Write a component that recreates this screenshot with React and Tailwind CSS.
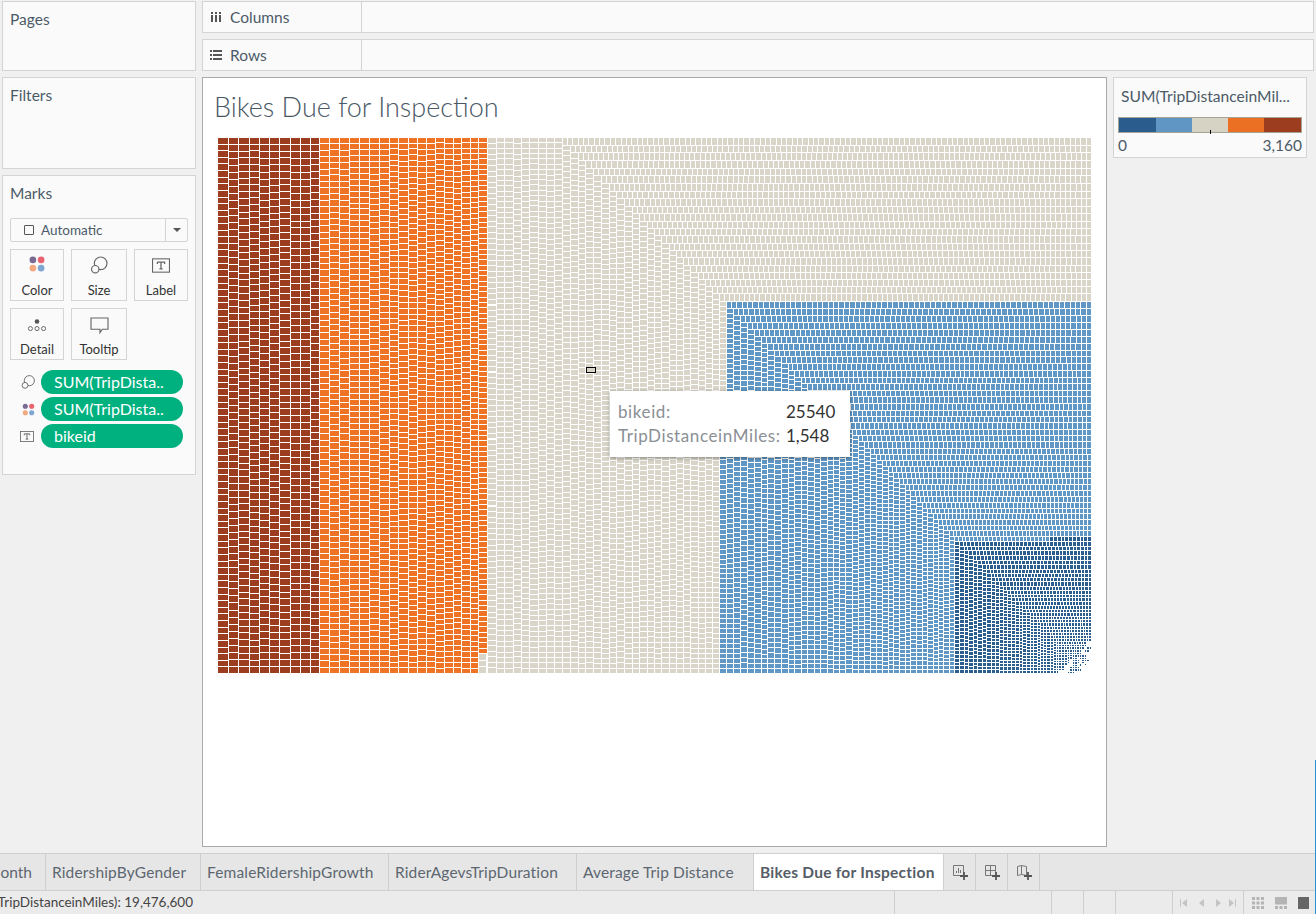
import React from "react";

// treemap data is generated: a big ordered set of small cells laid out in staircases
const COLORS = { brown: "#9c3d20", orange: "#ee7324", beige: "#d9d5c8", light: "#6197c4", dark: "#2b5e8e" };
const OFF_X = 218;
const OFF_Y = 138;
const BOTTOM = 674;
const RIGHT = 1092;

let seed = 7;
const rand = () => {
  seed = (seed * 16807) % 2147483647;
  return seed / 2147483647;
};
const lerp = (a, b, t) => a + (b - a) * t;

const paths = { brown: [], orange: [], beige: [], light: [], dark: [] };

function cell(color, x, y, w, h) {
  const x0 = Math.round(x);
  const y0 = Math.round(y);
  const cw = Math.round(x + w) - 1 - x0;
  const ch = Math.round(y + h) - 1 - y0;
  if (cw < 1 || ch < 1) return;
  // bottom right corner of the map is empty
  if (x0 + y0 > 1749) return;
  if (x0 + y0 > 1728 && rand() < 0.45) return;
  paths[color].push(`M${x0 - OFF_X} ${y0 - OFF_Y}h${cw}v${ch}h${-cw}z`);
}

function column(color, x, w, y0, y1, cellH) {
  const n = Math.max(1, Math.round((y1 - y0) / (cellH * (1 + rand() * 0.08))));
  const h = (y1 - y0) / n;
  for (let i = 0; i < n; i++) cell(color, x, y0 + i * h, w, h);
}

function row(color, y, h, x0, x1, cellW) {
  const n = Math.max(1, Math.round((x1 - x0) / (cellW * (1 + rand() * 0.05))));
  const w = (x1 - x0) / n;
  for (let i = 0; i < n; i++) {
    const x = x0 + i * w;
    cell(typeof color === "function" ? color(x) : color, x, y, w, h);
  }
}

function stair({ color, x0, y0, x1, y1, steps, dx, dy, rowW, colH, bottom, rowColor }) {
  const weight = (pair) => {
    let sum = 0;
    for (let i = 0; i < steps; i++) sum += lerp(pair[0], pair[1], i / (steps - 1));
    return sum;
  };
  const sx = (x1 - x0) / weight(dx);
  const sy = (y1 - y0) / weight(dy);
  let x = x0;
  let y = y0;
  for (let i = 0; i < steps; i++) {
    const t = i / (steps - 1);
    const w = lerp(dx[0], dx[1], t) * sx;
    const h = lerp(dy[0], dy[1], t) * sy;
    row(rowColor && i === 0 ? rowColor : color, y, h, x, RIGHT, lerp(rowW[0], rowW[1], t));
    column(color, x, w, y + h, bottom ? bottom(i) : BOTTOM, lerp(colH[0], colH[1], t));
    x += w;
    y += h;
  }
}

// dark red block
[218, 228.7, 238.7, 249.7, 259.7, 270, 280, 290.7, 300.7, 311, 319.7].forEach((x, i, all) => {
  if (i < all.length - 1) column("brown", x, all[i + 1] - x, OFF_Y, BOTTOM, 6.6);
});

// orange block
{
  const n = 18;
  let x = 319.7;
  for (let i = 0; i < n; i++) {
    const w = lerp(10, 8, i / (n - 1)) * (168 / (9 * n));
    column("orange", x, w, OFF_Y, i === n - 1 ? 654 : BOTTOM, lerp(6, 5.1, i / (n - 1)));
    x += w;
  }
}
column("beige", 479.3, 8, 654, BOTTOM, 5.5);

// beige block, full height columns then staircase
[487.7, 496.7, 505, 513.7, 521.7, 530, 538.7, 547, 554.7, 562.7].forEach((x, i, all) => {
  if (i < all.length - 1) column("beige", x, all[i + 1] - x, OFF_Y, BOTTOM, 5.2);
});
stair({
  color: "beige",
  x0: 562.7,
  y0: OFF_Y,
  x1: 726.6,
  y1: 301.6,
  steps: 22,
  dx: [8, 7],
  dy: [7.6, 7],
  rowW: [5.1, 4.9],
  colH: [5.1, 4.9],
  bottom: (i) => (i === 21 ? 455 : BOTTOM),
});
column("light", 719.6, 7, 455, BOTTOM, 4.9);

// blue blocks
stair({
  color: "light",
  x0: 726.6,
  y0: 301.6,
  x1: 955,
  y1: 537,
  steps: 37,
  dx: [7, 5.2],
  dy: [7, 5.5],
  rowW: [5.2, 3.8],
  colH: [5, 3.7],
});
stair({
  color: "dark",
  rowColor: (x) => (x < 1047 ? "light" : "dark"),
  x0: 955,
  y0: 537,
  x1: RIGHT,
  y1: BOTTOM,
  steps: 41,
  dx: [5, 1.9],
  dy: [5.2, 1.9],
  rowW: [3.7, 2],
  colH: [3.7, 2],
});

function Treemap() {
  return (
    <svg width="875" height="536" className="block" shapeRendering="crispEdges">
      {Object.keys(paths).map((k) => (
        <path key={k} d={paths[k].join("")} fill={COLORS[k]} />
      ))}
    </svg>
  );
}

const paneCls = "border border-[#d4d4d4] bg-[#fafafa] text-[#4c5a68] text-[15.5px]";

function ColorIcon({ size = 22 }) {
  return (
    <svg width={size} height={size} viewBox="0 0 24 24">
      <circle cx="7.5" cy="7.5" r="3.6" fill="#7b6a93" />
      <circle cx="16.5" cy="7.5" r="3.6" fill="#e8636f" />
      <circle cx="7.5" cy="16.5" r="3.6" fill="#f3a87f" />
      <circle cx="16.5" cy="16.5" r="3.6" fill="#7fa6d2" />
    </svg>
  );
}

function SizeIcon({ size = 20 }) {
  return (
    <svg width={size} height={size} viewBox="0 0 24 24" fill="none" stroke="#666" strokeWidth="1.4">
      <circle cx="14" cy="10" r="7.6" />
      <circle cx="7.5" cy="17" r="4.4" fill="#fafafa" />
    </svg>
  );
}

function LabelIcon({ w = 18, h = 15 }) {
  return (
    <svg width={w} height={h} viewBox="0 0 20 16" fill="none">
      <rect x="0.6" y="0.6" width="18.8" height="14.8" stroke="#666" strokeWidth="1.2" />
      <path d="M6 4.2h8v2M10 4.2v7.6M8.2 11.8h3.6M6 4.2v2" stroke="#666" strokeWidth="1.4" />
    </svg>
  );
}

function DetailIcon() {
  return (
    <svg width="20" height="16" viewBox="0 0 22 18" fill="none" stroke="#666" strokeWidth="1.1">
      <circle cx="11" cy="5" r="2.6" fill="#555" stroke="none" />
      <circle cx="3.6" cy="13" r="2.3" />
      <circle cx="11" cy="13" r="2.3" />
      <circle cx="18.4" cy="13" r="2.3" />
    </svg>
  );
}

function TooltipIcon() {
  return (
    <svg width="19" height="17" viewBox="0 0 20 18" fill="none" stroke="#666" strokeWidth="1.2">
      <path d="M1 1h18v12h-6l-2.5 3.600v-3.600H1z" />
    </svg>
  );
}

function CardButton({ width, label, children }) {
  return (
    <div className={`${width} h-[52px] border border-[#d4d4d4] flex flex-col items-center text-[#333] text-[13px]`}>
      <div className="h-[30px] flex items-end justify-center">{children}</div>
      <div className="mt-[2px] leading-[16px]">{label}</div>
    </div>
  );
}

function Pill({ icon, children }) {
  return (
    <div className="flex items-center h-[24px]">
      <div className="w-[31px] pl-[10px] flex items-center">{icon}</div>
      <div className="w-[142px] h-[24px] rounded-full bg-[#00b180] text-white text-[16px] leading-[24px] pl-[13px]">
        {children}
      </div>
    </div>
  );
}

function Shelf({ label, icon }) {
  return (
    <div className={`${paneCls} h-[32px] flex items-center`}>
      <div className="w-[159px] h-full flex items-center border-r border-[#d4d4d4] shrink-0">
        <div className="w-[27px] pl-[7px] flex items-center">{icon}</div>
        <span className="pt-[2px]">{label}</span>
      </div>
    </div>
  );
}

function Tab({ width, children }) {
  return (
    <div className={`${width} shrink-0 h-full border-r border-[#cfcfcf] pl-[6px] pt-[2px] flex items-center text-[15.5px] tracking-[0.15px] text-[#5d6670]`}>
      {children}
    </div>
  );
}

function AddIcon({ children }) {
  return (
    <div className="w-[32px] shrink-0 h-full border-r border-[#cfcfcf] flex items-center justify-center">
      <svg width="18" height="18" viewBox="0 0 18 18" fill="none">
        {children}
        <path d="M13 9v8M9 13h8" stroke="#555" strokeWidth="1.8" />
      </svg>
    </div>
  );
}

export default function App() {
  return (
    <div className="relative w-[1316px] h-[914px] overflow-hidden bg-[#f0f0f0] font-['Lato',sans-serif] flex flex-col">
      <div className="h-[853px] flex shrink-0 pt-px pl-[2px] gap-[6px]">
        {/* left cards */}
        <div className="w-[194px] shrink-0 flex flex-col gap-[6px]">
          <div className={`${paneCls} h-[70px] pl-[7px] pt-[8px] leading-[18px]`}>Pages</div>
          <div className={`${paneCls} h-[92px] pl-[7px] pt-[8px] leading-[18px]`}>Filters</div>
          <div className={`${paneCls} h-[300px] pl-[7px] pt-[8px]`}>
            <div className="leading-[18px]">Marks</div>
            <div className="mt-[16px] w-[178px] h-[24px] border border-[#d4d4d4] rounded-[2px] flex items-center text-[13.5px]">
              <div className="w-[155px] h-full flex items-center border-r border-[#d4d4d4] pl-[13px]">
                <span className="w-[10px] h-[10px] border border-[#555] rounded-[1px] mr-[7px]" />
                Automatic
              </div>
              <div className="flex-1 flex justify-center">
                <span className="border-x-[4px] border-x-transparent border-t-[4px] border-t-[#555]" />
              </div>
            </div>
            <div className="mt-[7px] flex gap-[7px]">
              <CardButton width="w-[54px]" label="Color">
                <div className="pb-[5px]">
                  <ColorIcon />
                </div>
              </CardButton>
              <CardButton width="w-[56px]" label="Size">
                <div className="pb-[5px]">
                  <SizeIcon />
                </div>
              </CardButton>
              <CardButton width="w-[54px]" label="Label">
                <div className="pb-[7px]">
                  <LabelIcon />
                </div>
              </CardButton>
            </div>
            <div className="mt-[7px] flex gap-[7px]">
              <CardButton width="w-[54px]" label="Detail">
                <div className="pb-[6px]">
                  <DetailIcon />
                </div>
              </CardButton>
              <CardButton width="w-[56px]" label="Tooltip">
                <div className="pb-[5px]">
                  <TooltipIcon />
                </div>
              </CardButton>
            </div>
            <div className="mt-[10px] flex flex-col gap-[3px]">
              <Pill icon={<SizeIcon size={16} />}>SUM(TripDista..</Pill>
              <Pill icon={<ColorIcon size={17} />}>SUM(TripDista..</Pill>
              <Pill icon={<LabelIcon w={14} h={11} />}>bikeid</Pill>
            </div>
          </div>
        </div>

        {/* shelves + view */}
        <div className="flex-1 flex flex-col gap-[6px] min-w-0 pr-[2px]">
          <Shelf
            label="Columns"
            icon={
              <svg width="12" height="12" viewBox="0 0 12 12" fill="#555">
                <path d="M1 4h2v7H1zM5 4h2v7H5zM9 4h2v7H9zM1 1h2v2H1zM5 1h2v2H5zM9 1h2v2H9z" />
              </svg>
            }
          />
          <Shelf
            label="Rows"
            icon={
              <svg width="12" height="12" viewBox="0 0 12 12" fill="#555">
                <path d="M0 1h2v2H0zM3 1h9v2H3zM0 5h2v2H0zM3 5h9v2H3zM0 9h2v2H0zM3 9h9v2H3z" />
              </svg>
            }
          />
          <div className="flex gap-[6px] items-start">
            <div className="relative w-[905px] h-[770px] shrink-0 border border-[#a9a9a9] bg-white">
              <div className="pl-[11px] pt-[14px] h-[60px] text-[27px] leading-[30px] font-light text-[#4a5866]">
                Bikes Due for Inspection
              </div>
              <div className="pl-[15px]">
                <Treemap />
              </div>
              {/* hovered mark */}
              <div className="absolute left-[383px] top-[289px] w-[10px] h-[6px] border border-black bg-[#d9d5c8]" />
              <div className="absolute left-[407px] top-[313px] w-[240px] h-[66px] bg-white shadow-[0_1px_4px_rgba(0,0,0,0.4)] pl-[8px] pt-[9px] text-[17px] leading-[24px]">
                <div className="flex">
                  <span className="w-[168px] text-[#8a8f94] tracking-[0.6px]">bikeid:</span>
                  <span className="text-[#333]">25540</span>
                </div>
                <div className="flex">
                  <span className="w-[168px] text-[#8a8f94] tracking-[0.6px]">TripDistanceinMiles:</span>
                  <span className="text-[#333]">1,548</span>
                </div>
              </div>
            </div>
            <div className={`${paneCls} w-[194px] h-[81px] shrink-0 px-[4px] pt-[9px]`}>
              <div className="pl-[3px] leading-[18px] whitespace-nowrap text-[15.6px]">SUM(TripDistanceinMil...</div>
              <div className="relative mt-[12px] h-[16px] flex border border-[#a8a493]">
                <div className="w-[37px] bg-[#2a5d8d]" />
                <div className="w-[36px] bg-[#5f96c3]" />
                <div className="w-[36px] bg-[#d6d2c4]" />
                <div className="w-[36px] bg-[#ec7024]" />
                <div className="flex-1 bg-[#9c3d20]" />
                <div className="absolute left-[91px] bottom-[-2px] w-px h-[4px] bg-black" />
              </div>
              <div className="mt-[3px] flex justify-between leading-[18px]">
                <span>0</span>
                <span>3,160</span>
              </div>
            </div>
          </div>
        </div>
      </div>

      {/* sheet tabs */}
      <div className="h-[38px] shrink-0 flex bg-[#e6e6e6] border-y border-[#cfcfcf]">
        <div className="w-[46px] shrink-0 h-full border-r border-[#cfcfcf] flex items-center justify-end pr-[13px] pt-[2px] overflow-hidden text-[15.5px] text-[#5d6670]">
          <span className="shrink-0">onth</span>
        </div>
        <Tab width="w-[155px]">RidershipByGender</Tab>
        <Tab width="w-[188px]">FemaleRidershipGrowth</Tab>
        <Tab width="w-[188px]">RiderAgevsTripDuration</Tab>
        <Tab width="w-[177px]">Average Trip Distance</Tab>
        <div className="w-[190px] shrink-0 h-full bg-white border-r border-[#cfcfcf] pl-[6px] pt-[2px] flex items-center text-[15.5px] tracking-[0.25px] font-bold text-[#555d66]">
          Bikes Due for Inspection
        </div>
        <AddIcon>
          <path d="M2.500 2.500h10v10h-10z" stroke="#777" />
          <path d="M5.500 10V8M7.500 10V5M9.500 10V7" stroke="#777" />
        </AddIcon>
        <AddIcon>
          <path d="M2.500 2.500h10v10h-10zM2.500 7.500h10M7.500 2.500v10" stroke="#777" />
        </AddIcon>
        <AddIcon>
          <path d="M2.500 3.500l4-1 5 1v9l-5-1-4 1zM6.500 2.500v9" stroke="#777" />
        </AddIcon>
      </div>

      {/* status bar */}
      <div className="flex-1 flex bg-[#ebebeb] text-[13.5px] text-[#444]">
        <div className="w-[193px] shrink-0 flex items-center justify-end overflow-hidden">
          <span className="shrink-0">SUM(TripDistanceinMiles): 19,476,600</span>
        </div>
        <div className="w-[702px] shrink-0 border-r border-[#cfcfcf]" />
        <div className="w-[157px] shrink-0 border-r border-[#cfcfcf]" />
        <div className="w-[32px] shrink-0 border-r border-[#cfcfcf]" />
        <div className="w-[32px] shrink-0 border-r border-[#cfcfcf]" />
        <div className="w-[57px] shrink-0 border-r border-[#cfcfcf]" />
        <div className="w-[71px] shrink-0 border-r border-[#cfcfcf] flex items-center justify-center">
          <svg width="56" height="10" viewBox="0 0 56 10" fill="#c4c4c4">
            <path d="M0 1h1v8H0zM7 1v8L2 5zM24 1v8l-5-4zM36 1l5 4-5 4zM49 1l5 4-5 4zM55 1h1v8h-1z" />
          </svg>
        </div>
        <div className="flex items-center pl-[8px] gap-[11px]">
          <svg width="12" height="12" viewBox="0 0 12 12" fill="#b4b4b4">
            <path d="M0 0h3v3H0zM4.500 0h3v3h-3zM9 0h3v3H9zM0 4.500h3v3H0zM4.500 4.500h3v3h-3zM9 4.500h3v3H9zM0 9h3v3H0zM4.500 9h3v3h-3zM9 9h3v3H9z" />
          </svg>
          <svg width="12" height="12" viewBox="0 0 12 12" fill="#b4b4b4">
            <path d="M0 0h12v7.500H0zM0 9h3v3H0zM4.500 9h3v3h-3zM9 9h3v3H9z" />
          </svg>
          <span className="w-[11px] h-[12px] bg-[#666]" />
        </div>
      </div>

      <div className="absolute right-0 top-[760px] bottom-0 w-px bg-[#2b8fd6]" />
    </div>
  );
}
